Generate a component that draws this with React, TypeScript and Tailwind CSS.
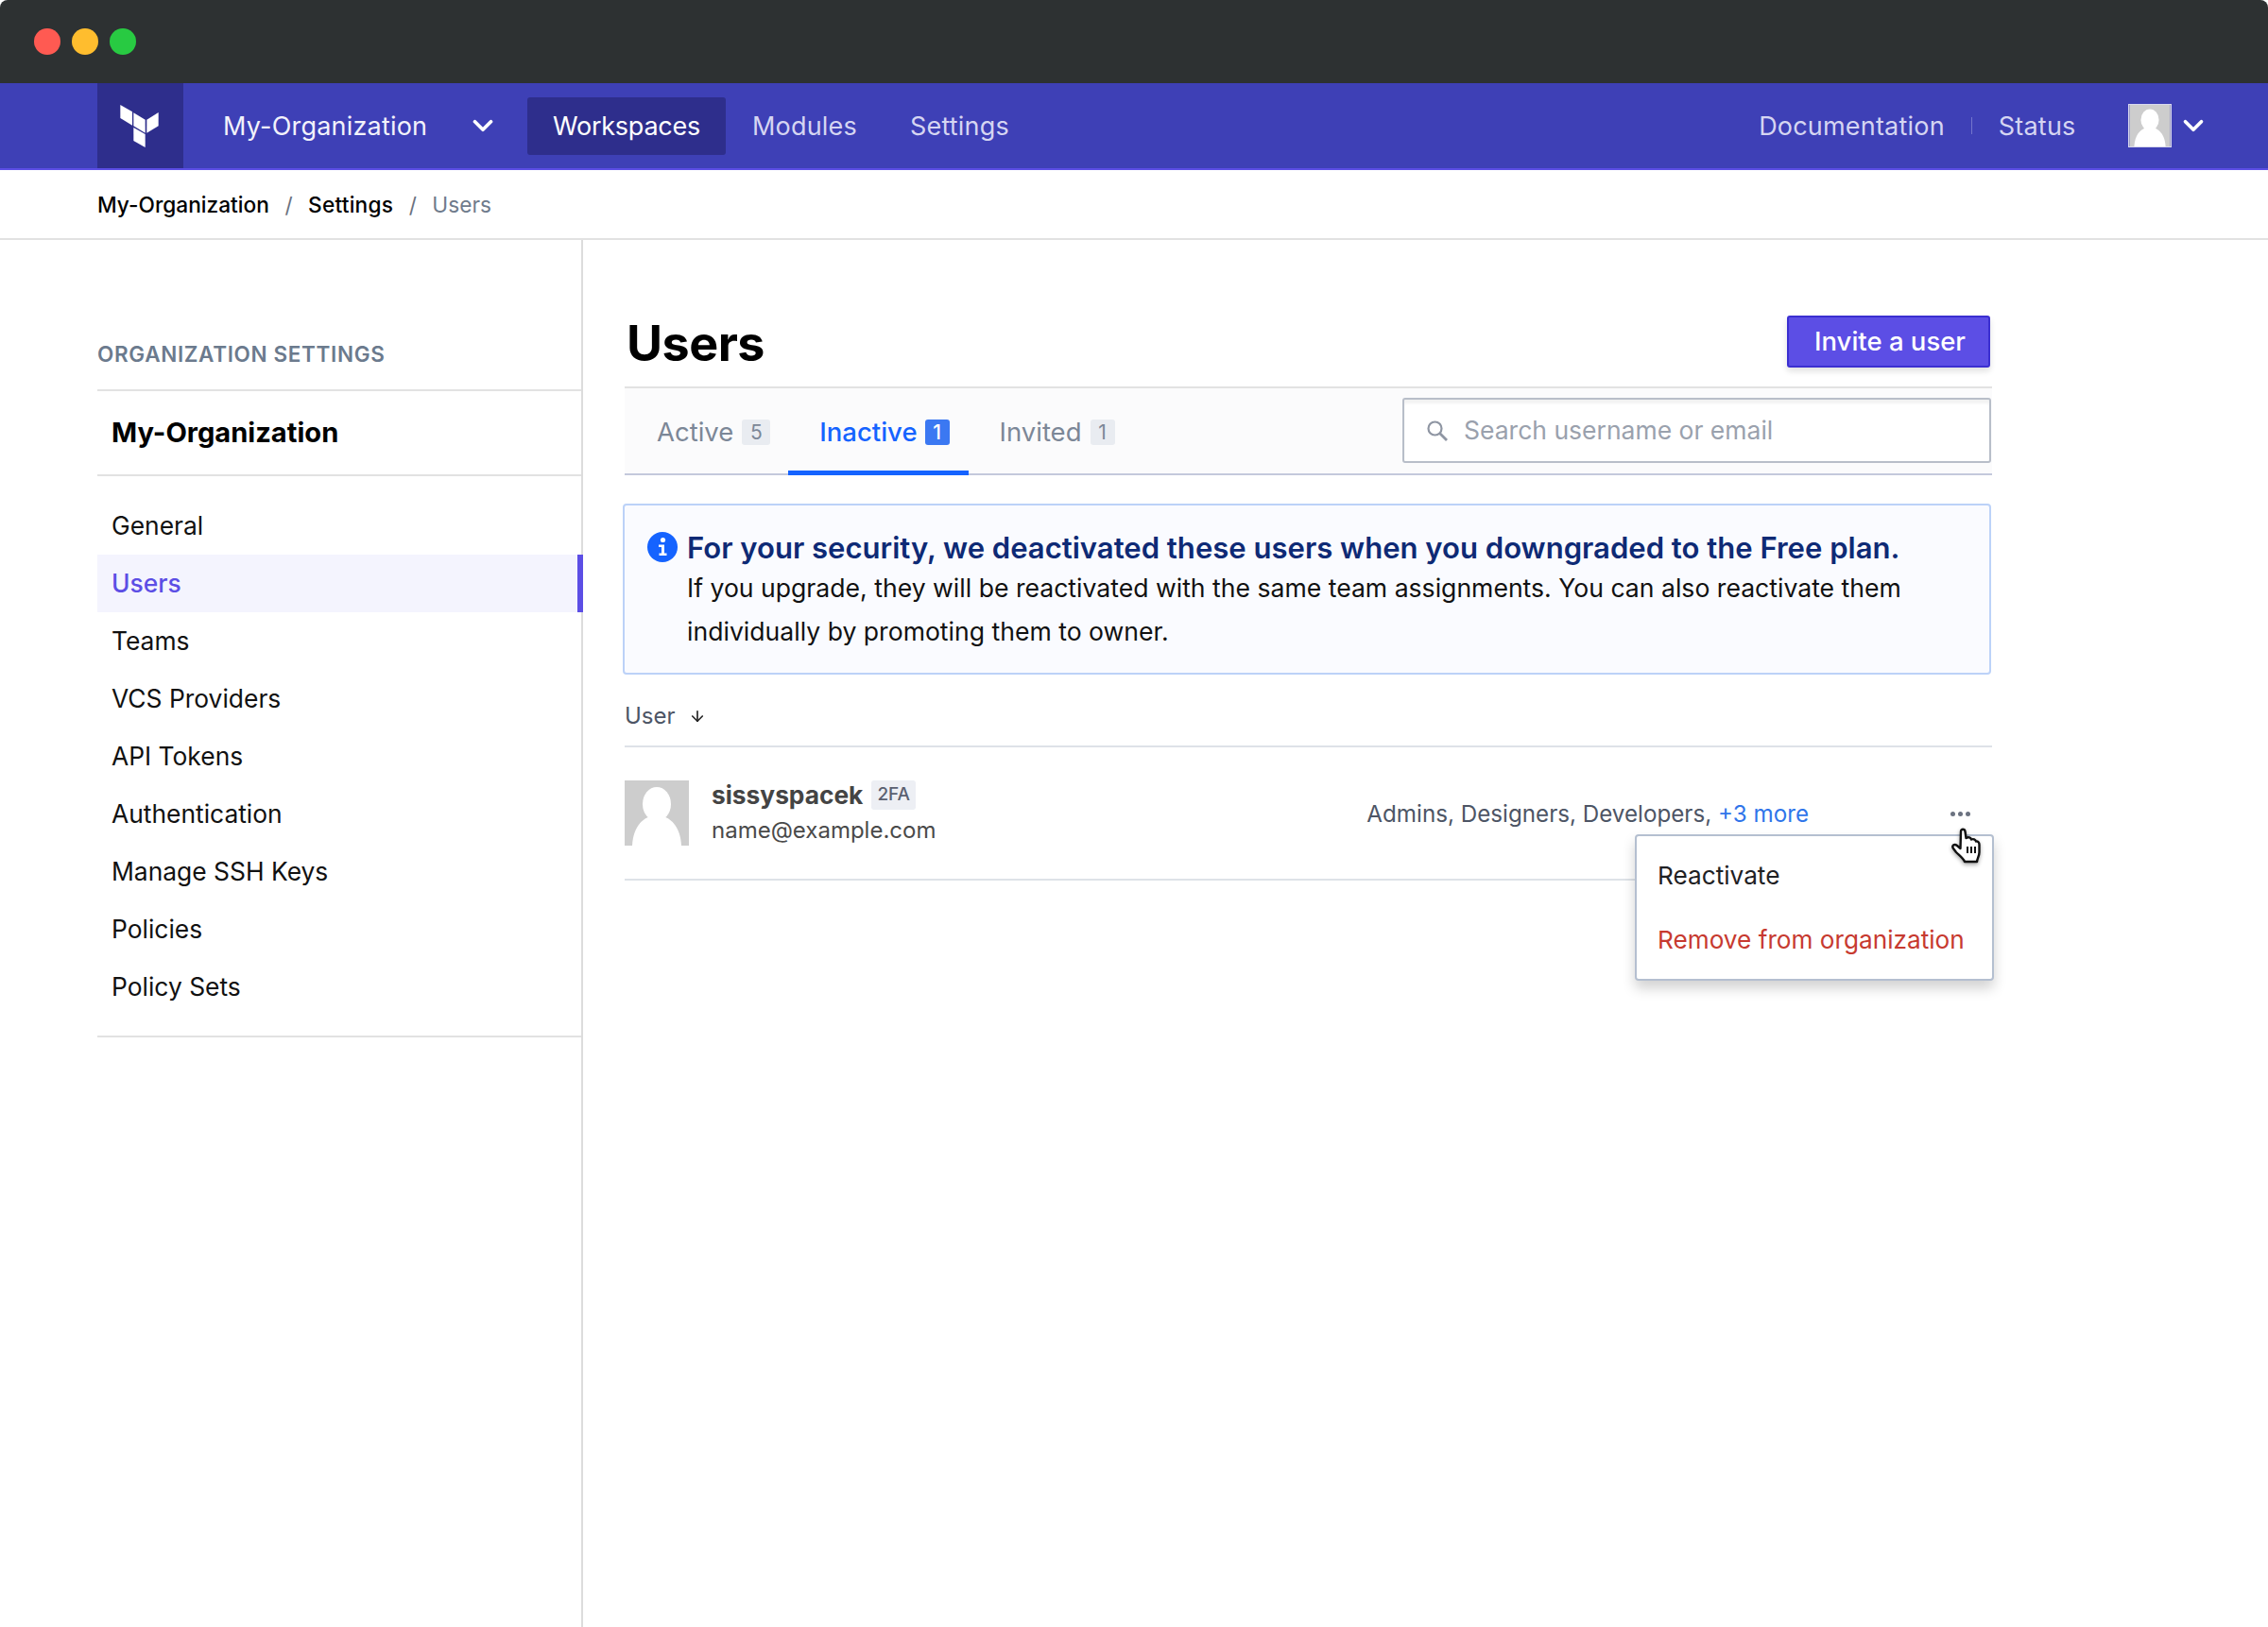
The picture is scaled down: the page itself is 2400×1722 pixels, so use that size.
import React from 'react';
import { ArrowDown, ChevronDown } from 'lucide-react';

const settingsLinks = ['General', 'Users', 'Teams', 'VCS Providers', 'API Tokens', 'Authentication', 'Manage SSH Keys', 'Policies', 'Policy Sets'];

const TerraformLogo = () => (
  <svg viewBox="112 93 121 135" className="w-[41px] h-[45px] mr-[2px]" fill="#ffffff">
    <polygon points="112,93 150,115 150,158 112,135" />
    <polygon points="154,118 191,140 191,182 154,160" />
    <polygon points="196,140 233,117 233,160 196,182" />
    <polygon points="154,165 191,186 191,228 154,207" />
  </svg>
);

const Avatar = ({ className }: { className: string }) => (
  <svg viewBox="0 0 68 69" className={className}>
    <rect width="68" height="69" fill="#cdcdcd" />
    <ellipse cx="34" cy="25" rx="15" ry="18" fill="#ffffff" />
    <path d="M8 69 C9 50 18 41 27 38 L41 38 C50 41 59 50 60 69 Z" fill="#ffffff" />
  </svg>
);

const Hand = () => (
  <svg viewBox="0 0 31 38" className="w-[31px] h-[38px] drop-shadow-[0_2px_2px_rgba(0,0,0,0.35)]">
    <path
      d="M10 4 C10 1 14 1 14.5 4 L15.5 11 C18 9.5 20.5 10.5 21 12.5 C23 11.5 25.5 12.5 26 14.5 C28 14 29.5 16 29.5 18 L29.5 26 C29.5 30 27.5 32 27 36 L14 36 C13 33 9 30 5 26 L2 22 C0 19 3 16.5 6 19 L9.5 22 Z"
      fill="#ffffff"
      stroke="#111111"
      strokeWidth="2.4"
      strokeLinejoin="round"
    />
    <path d="M17 20 V27 M21 20 V27 M25 20 V27" stroke="#111111" strokeWidth="2" />
  </svg>
);

const InfoIcon = () => (
  <svg viewBox="0 0 32 32" className="w-8 h-8 shrink-0 mt-px">
    <circle cx="16" cy="16" r="16" fill="#1563ff" />
    <circle cx="16.5" cy="8.5" r="2.6" fill="#ffffff" />
    <path d="M12 13.5 H18 V22.5 H20.5 V25 H12.5 V22.5 H15 V16 H12 Z" fill="#ffffff" />
  </svg>
);

const SearchIcon = () => (
  <svg viewBox="0 0 22 22" className="w-[22px] h-[22px] shrink-0" fill="none" stroke="#8f96a3">
    <circle cx="8.5" cy="8.5" r="7" strokeWidth="2.2" />
    <path d="M13.5 13.5 L21 21" strokeWidth="2.8" />
  </svg>
);

const Badge = ({ children, className }: { children: React.ReactNode; className: string }) => (
  <span className={`flex items-center justify-center h-[27px] rounded-[3px] text-[21px] ${className}`}>
    {children}
  </span>
);

export default function App() {
  return (
    <div className="w-[2400px] h-[1722px] overflow-hidden bg-white flex flex-col [font-family:Inter,sans-serif]">
      <div className="h-[88px] shrink-0 bg-[#2d3132] rounded-t-[8px] flex items-center gap-3 pl-9">
        <span className="w-7 h-7 rounded-full bg-[#ff5a52]" />
        <span className="w-7 h-7 rounded-full bg-[#ffbd2e]" />
        <span className="w-7 h-7 rounded-full bg-[#28ca42]" />
      </div>

      <nav className="h-[92px] shrink-0 bg-[#3e40b6] border-b-2 border-[#5c4ee5] flex items-stretch pl-[103px] pr-[62px] text-[27px] tracking-[0.2px]">
        <div className="w-[91px] bg-[#2e2e8c] flex items-center justify-center">
          <TerraformLogo />
        </div>
        <div className="flex items-center pl-[42px] text-[#f2f2fb] w-[364px]">
          <span className="pt-[3px]">My-Organization</span>
          <ChevronDown className="w-[34px] h-[34px] ml-[42px] text-white" strokeWidth={2.6} />
        </div>
        <div className="flex items-center gap-[28px] text-[#d5d5f2] pt-[1px]">
          <a className="h-[61px] px-[27px] pt-[2px] flex items-center rounded-[3px] bg-[#2e2e8c] text-white tracking-[-0.25px]">Workspaces</a>
          <a className="pt-[2px]">Modules</a>
          <a className="ml-[28px] pt-[2px]">Settings</a>
        </div>
        <div className="ml-auto flex items-center text-[#d5d5f2]">
          <a className="pt-[3px]">Documentation</a>
          <span className="w-px h-[18px] bg-[#7375cc] mx-[28px]" />
          <a className="pt-[3px]">Status</a>
          <div className="ml-[55.5px] w-[46px] h-[46px] border border-[#d8d8ee]">
            <Avatar className="w-full h-full" />
          </div>
          <ChevronDown className="w-[34px] h-[34px] ml-[6px] text-white" strokeWidth={2.6} />
        </div>
      </nav>

      <div className="h-[74px] shrink-0 border-b-2 border-[#e2e2e2] flex items-center pl-[103px] pt-[2px] text-[22.7px] text-black">
        <span className="font-medium">My-Organization</span>
        <span className="mx-[16.5px] text-[#6b7280]">/</span>
        <span className="font-medium tracking-[0.2px]">Settings</span>
        <span className="mx-[16.5px] text-[#6b7280]">/</span>
        <span className="text-[#6f7b8c]">Users</span>
      </div>

      <div className="flex-1 flex items-stretch">
        <aside className="w-[617px] shrink-0 pl-[103px] border-r-2 border-[#dcdcdc]">
          <div className="pt-[111px] pb-[27px] text-[22.5px] font-semibold leading-[20px] tracking-[0.65px] text-[#6b7a8d] border-b-2 border-[#e2e2e2]">
            ORGANIZATION SETTINGS
          </div>
          <div className="h-[90px] flex items-center pl-[15px] border-b-2 border-[#e2e2e2] text-[29.1px] font-bold text-black">
            My-Organization
          </div>
          <ul className="pt-[22px] pb-[21px] border-b-2 border-[#e2e2e2] text-[26.4px]">
            {settingsLinks.map((link) => (
              <li
                key={link}
                className={`h-[61px] flex items-center pl-[15px] ${
                  link === 'Users' ? 'bg-[#f4f4fe] text-[#5c4ee5] font-medium border-r-[6px] border-[#5c4ee5] mr-[-2px]' : 'text-[#111111]'
                }`}
              >
                {link}
              </li>
            ))}
          </ul>
        </aside>

        <main className="w-[1447px] ml-[44px] relative">
          <div className="h-[157px] flex items-start justify-between border-b-2 border-[#e2e2e2] pt-[78px]">
            <h1 className="text-[52px] leading-[64px] font-bold text-black ml-[2px] tracking-[-0.5px]">Users</h1>
            <button className="w-[215px] h-[55px] mt-[2px] pl-[3px] bg-[#5c4ee5] border-2 border-[#3b2fd1] rounded-[3px] text-white text-[27.5px] font-medium mr-[2px] shadow-[0_4px_6px_rgba(0,0,0,0.12)]">
              Invite a user
            </button>
          </div>

          <div className="h-[92px] bg-[#fbfbfc] border-b-2 border-[#c4c9dc] flex items-stretch text-[27.5px] relative">
            <div className="flex items-center gap-[9px] pl-[34px] pr-[19px] pt-[3px] text-[#7c8797]">
              Active <Badge className="w-[30px] bg-[#e9ecf1] text-[#7c8797]">5</Badge>
            </div>
            <div className="flex items-center gap-[8px] pl-[33px] pr-[20px] pt-[6px] text-[#1563ff] font-medium border-b-[5px] border-[#1563ff] mb-[-2px]">
              Inactive <Badge className="w-[26px] bg-[#3b78f2] text-white">1</Badge>
            </div>
            <div className="flex items-center gap-[9px] pl-[33px] pt-[3px] text-[#7c8797]">
              Invited <Badge className="w-[26px] bg-[#e9ecf1] text-[#7c8797]">1</Badge>
            </div>
            <div className="ml-auto mr-[1px] mt-[10px] w-[623px] h-[69px] bg-white border-2 border-[#b8bec9] rounded-[3px] shadow-[inset_0_4px_3px_rgba(0,0,0,0.05)] flex items-center pl-[24px] gap-[17px] text-[#9aa1ad] text-[26.5px]">
              <SearchIcon />
              <span>Search username or email</span>
            </div>
          </div>

          <div className="mt-[30px] ml-[-2px] w-[1448px] h-[181px] bg-[#fafbff] border-2 border-[#bcd2f8] rounded-[4px] pl-[24px] pr-[60px] pt-[27px] flex gap-[10px]">
            <InfoIcon />
            <div>
              <div className="text-[31.05px] leading-[36px] font-semibold text-[#0e2a75]">
                For your security, we deactivated these users when you downgraded to the Free plan.
              </div>
              <p className="text-[26.6px] leading-[46px] mt-px text-[#111111]">
                If you upgrade, they will be reactivated with the same team assignments. You can also reactivate them individually by promoting them to owner.
              </p>
            </div>
          </div>

          <div className="h-[77px] border-b-2 border-[#dee2e8] flex items-center pt-[12px] text-[24px] text-[#4d5565]">
            User
            <ArrowDown className="w-[18px] h-[20px] ml-[14px] text-[#222222]" strokeWidth={2.2} />
          </div>

          <div className="h-[141px] border-b-2 border-[#dee2e8] flex items-center">
            <Avatar className="w-[68px] h-[69px] shrink-0" />
            <div className="ml-[24px]">
              <div className="flex items-center gap-[9px]">
                <span className="text-[26.3px] leading-[34px] font-bold text-[#444444]">sissyspacek</span>
                <span className="h-[31px] px-[6px] flex items-center bg-[#edeff4] rounded-[3px] text-[19px] font-medium text-[#5a6070]">2FA</span>
              </div>
              <div className="text-[24px] leading-[36px] mt-[2px] text-[#4a4a4a]">name@example.com</div>
            </div>
            <div className="ml-auto mr-[194px] text-[24.2px] text-[#4d5565] mt-[4px]">
              Admins, Designers, Developers, <span className="text-[#2f75ea]">+3 more</span>
            </div>
          </div>

          <div className="absolute left-[1403px] top-[605px] w-[21px] flex justify-between">
            <span className="w-[5px] h-[5px] rounded-full bg-[#6b7280]" />
            <span className="w-[5px] h-[5px] rounded-full bg-[#6b7280]" />
            <span className="w-[5px] h-[5px] rounded-full bg-[#6b7280]" />
          </div>

          <div className="absolute left-[1069px] top-[629px] w-[380px] h-[155px] bg-white border-2 border-[#b4bfd0] rounded-[4px] shadow-[0_8px_14px_rgba(0,0,0,0.18)] pl-[22px] text-[26.2px] flex flex-col justify-center gap-[31px]">
            <span className="leading-[37px] text-[#1f2124]">Reactivate</span>
            <span className="leading-[37px] text-[#c73a30]">Remove from organization</span>
          </div>

          <div className="absolute left-[1404px] top-[622px]">
            <Hand />
          </div>
        </main>
      </div>
    </div>
  );
}
